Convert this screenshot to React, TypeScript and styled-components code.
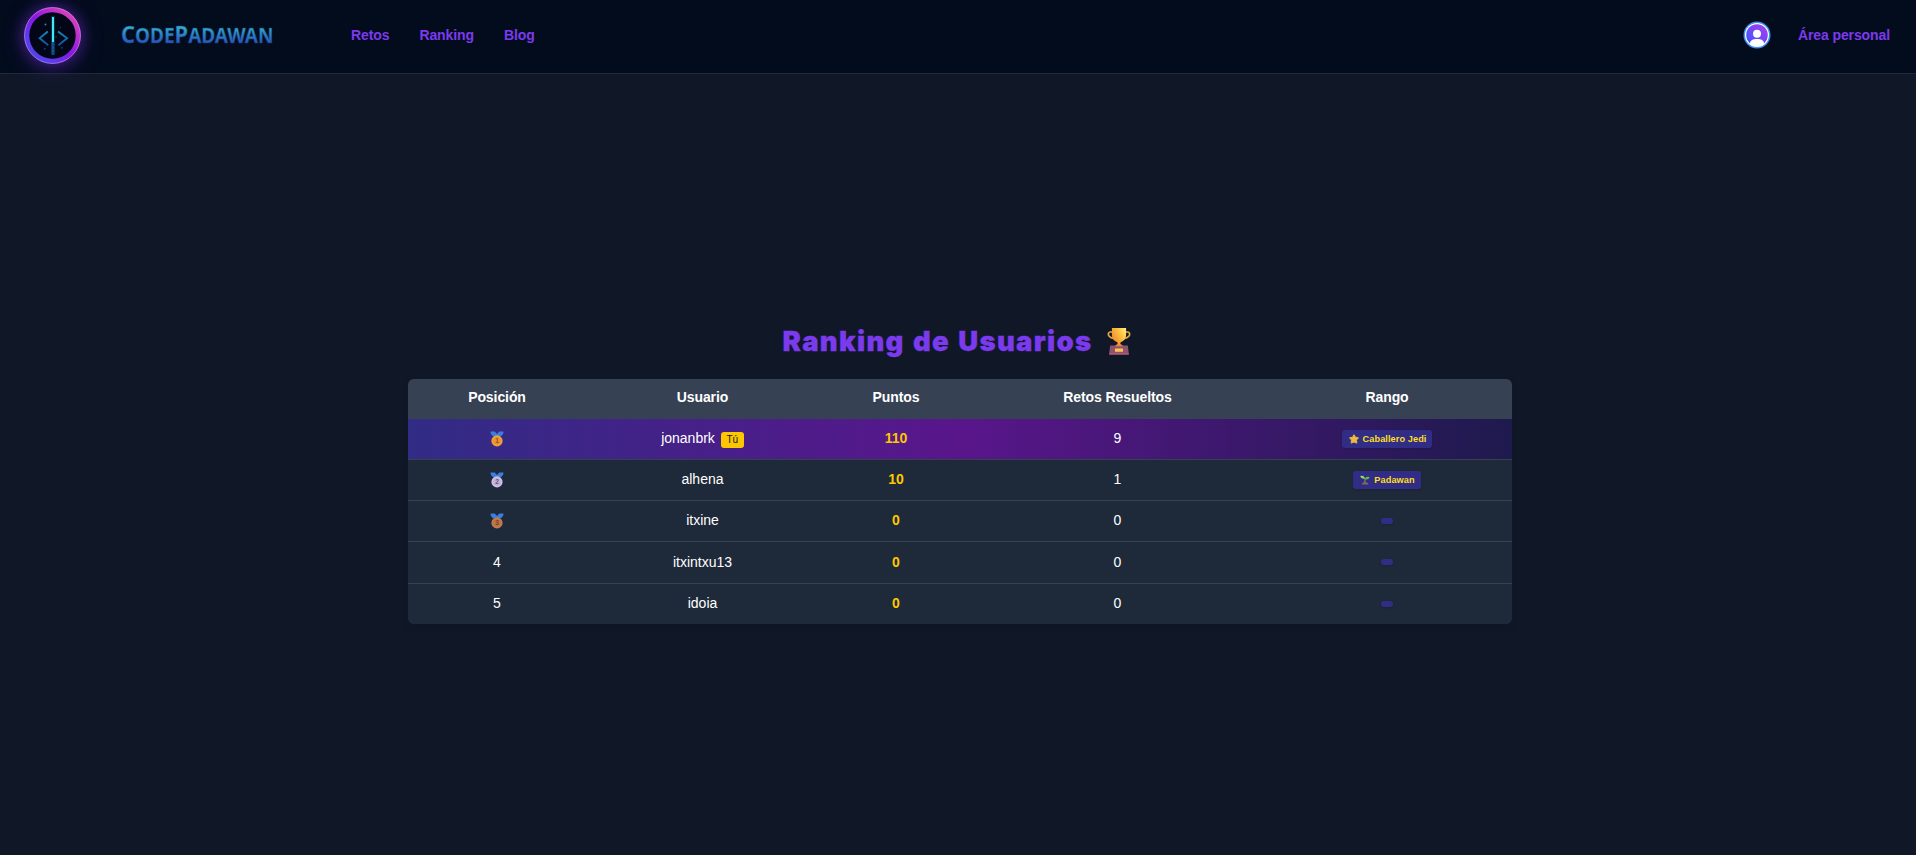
import React from "react";
import styled, { createGlobalStyle } from "styled-components";

const GlobalStyle = createGlobalStyle`
  *, *::before, *::after { box-sizing: border-box; }
  body {
    margin: 0;
    background: #101828;
    color: #fff;
    font-family: "Liberation Sans", Arial, sans-serif;
    font-size: 14px;
  }
`;

const Page = styled.div`
  display: flex;
  flex-direction: column;
  height: 855px;
  overflow: hidden;
`;

const NavBar = styled.header`
  display: flex;
  align-items: center;
  height: 74px;
  padding: 0 26px 3px 24px;
  background: #030c1d;
  border-bottom: 1px solid #1e2939;
`;

const LogoRing = styled.div`
  width: 57px;
  height: 57px;
  border-radius: 50%;
  box-shadow: 0 0 14px 1px rgba(130, 50, 235, 0.4), 0 4px 24px rgba(130, 50, 235, 0.25);
  svg { display: block; }
`;

const Brand = styled.div`
  display: flex;
  margin-left: 39px;
  svg { display: block; overflow: visible; }
`;

const Links = styled.nav`
  display: flex;
  gap: 30px;
  margin-left: 77px;
`;

const NavLink = styled.a`
  color: #7c3aed;
  font-weight: 700;
  font-size: 14px;
  line-height: 20px;
  letter-spacing: -0.1px;
  text-decoration: none;
`;

const Account = styled.div`
  display: flex;
  align-items: center;
  gap: 27px;
  margin-left: auto;
  svg { display: block; }
`;

const Main = styled.main`
  display: flex;
  flex-direction: column;
  align-items: center;
  padding: 248px 0 0 4px;
`;

const Title = styled.h1`
  display: flex;
  align-items: center;
  margin: 0 6px 18px 0;
  height: 39px;
  color: #7c3aed;
  font-family: Inter, "Liberation Sans", sans-serif;
  font-weight: 900;
  font-size: 27.5px;
  line-height: 39px;
  white-space: nowrap;
  svg { margin: 0 0 2px 15px; }
`;

const TitleText = styled.span`
  letter-spacing: 1.3px;
  word-spacing: 1.5px;
  -webkit-text-stroke: 0.3px #7c3aed;
`;

const TableFrame = styled.div`
  width: 1104px;
  height: 245px;
  border-radius: 6px;
  overflow: hidden;
  background: #1e2939;
  box-shadow: 0 3px 6px rgba(3, 7, 18, 0.12);
`;

const Table = styled.table`
  width: 100%;
  table-layout: fixed;
  border-collapse: separate;
  border-spacing: 0;
  text-align: center;
`;

const Col = styled.col<{ $width: number }>`
  width: ${(p) => p.$width}px;
`;

const HeadRow = styled.tr`
  height: 40px;
  background: #364153;
`;

const HeadCell = styled.th`
  padding: 0 0 4px;
  font-size: 14px;
  font-weight: 700;
  line-height: 20px;
  letter-spacing: -0.08px;
`;

const Row = styled.tr<{ $current?: boolean; $height: number }>`
  height: ${(p) => p.$height}px;
  background: ${(p) =>
    p.$current ? "linear-gradient(90deg, #312c85, #59168b, #1e1a4d)" : "#1e2939"};
  &:not(:last-child) td { border-bottom: 1px solid #364153; }
`;

const Cell = styled.td<{ $points?: boolean }>`
  padding: 0 0 2px;
  font-size: 14px;
  line-height: 20px;
  color: ${(p) => (p.$points ? "#fdc700" : "#fff")};
  font-weight: ${(p) => (p.$points ? 700 : 400)};
`;

const CellContent = styled.div<{ $drop?: number }>`
  display: flex;
  align-items: center;
  justify-content: center;
  padding-top: ${(p) => p.$drop ?? 0}px;
`;

const YouBadge = styled.span`
  margin: 3px 0 0 6px;
  width: 23px;
  height: 16px;
  border-radius: 3px;
  background: #fdc700;
  color: #101828;
  font-size: 10px;
  line-height: 16px;
`;

const RankBadge = styled.span<{ $empty?: boolean }>`
  display: flex;
  align-items: center;
  gap: 4px;
  height: ${(p) => (p.$empty ? 6 : 18)}px;
  width: ${(p) => (p.$empty ? "12px" : "auto")};
  padding: 0 ${(p) => (p.$empty ? 0 : 6)}px 0 ${(p) => (p.$empty ? 0 : 7)}px;
  border-radius: 3px;
  background: #312c85;
  color: #ffdf20;
  font-size: 9.2px;
  font-weight: 700;
  letter-spacing: 0.08px;
  line-height: 18px;
  white-space: nowrap;
  box-shadow: 0 1px 2px rgba(0, 0, 0, 0.12);
`;

const Logo = () => (
  <svg width="57" height="57" viewBox="0 0 57 57" fill="none">
    <defs>
      <linearGradient id="ring" x1="8" y1="50" x2="49" y2="7" gradientUnits="userSpaceOnUse">
        <stop stopColor="#4f46e5" />
        <stop offset="0.17" stopColor="#5b3df0" />
        <stop offset="0.5" stopColor="#8a17e4" />
        <stop offset="0.85" stopColor="#c535c8" />
        <stop offset="1" stopColor="#d946b5" />
      </linearGradient>
      <linearGradient id="code" x1="0" y1="24" x2="0" y2="39" gradientUnits="userSpaceOnUse">
        <stop stopColor="#128dbb" />
        <stop offset="1" stopColor="#0a4f9b" />
      </linearGradient>
    </defs>
    <circle cx="28.5" cy="28.5" r="28.3" fill="url(#ring)" />
    <circle cx="28.5" cy="28.5" r="28" stroke="#c98cf2" strokeOpacity="0.65" />
    <circle cx="28.5" cy="28.5" r="23.2" fill="#020617" />
    <path d="M23.8 24.5 15.6 31.3l8.7 7M34 24.5l9.1 6.8-8.7 7" stroke="url(#code)" strokeWidth="1.9" />
    <path d="M29 9v38" stroke="#0891b2" strokeOpacity="0.25" strokeWidth="4" />
    <path d="M29 10v25" stroke="#40e8f2" strokeWidth="2.1" />
    <path d="M29 35v13" stroke="#0a4a86" strokeWidth="2.8" />
    <path d="M28.8 36v10" stroke="#1172b4" strokeWidth="0.8" strokeDasharray="2 1.5" />
    <circle cx="21.5" cy="17.5" r="0.9" fill="#16a5ae" />
    <circle cx="36.5" cy="20.5" r="0.7" fill="#0a4562" />
    <circle cx="20.8" cy="41.8" r="0.9" fill="#0a4a80" />
    <circle cx="37.8" cy="40.8" r="0.9" fill="#0a4a80" />
    <circle cx="32" cy="30" r="0.7" fill="#0a5a80" />
  </svg>
);

const BrandName = () => (
  <svg width="154" height="24" viewBox="0 0 154 24">
    <defs>
      <linearGradient id="brand" x1="0" y1="3" x2="0" y2="20" gradientUnits="userSpaceOnUse">
        <stop stopColor="#32b3d8" />
        <stop offset="0.45" stopColor="#2987c8" />
        <stop offset="1" stopColor="#2853c2" />
      </linearGradient>
    </defs>
    <text
      x="1"
      y="19.5"
      textLength="152.5"
      lengthAdjust="spacingAndGlyphs"
      fill="url(#brand)"
      stroke="#1d3d6b"
      strokeWidth="0.4"
      fontFamily="'Noto Sans', sans-serif"
      fontWeight="700"
      fontSize="23.5"
    >
      C<tspan fontSize="20.5">ODE</tspan>P<tspan fontSize="20.5">ADAWAN</tspan>
    </text>
  </svg>
);

const Avatar = () => (
  <svg width="28" height="28" viewBox="0 0 28 28">
    <defs>
      <linearGradient id="avatar" x1="6" y1="23" x2="22" y2="5" gradientUnits="userSpaceOnUse">
        <stop stopColor="#4f46e5" />
        <stop offset="0.25" stopColor="#5454ff" />
        <stop offset="0.6" stopColor="#8044f5" />
        <stop offset="1" stopColor="#9a44f2" />
      </linearGradient>
      <clipPath id="avatarClip"><circle cx="14" cy="14" r="11.5" /></clipPath>
    </defs>
    <circle cx="14" cy="14" r="13.5" fill="#3b93ee" />
    <circle cx="14" cy="14" r="12" fill="#fff" />
    <circle cx="14" cy="14" r="10.8" fill="url(#avatar)" />
    <g clipPath="url(#avatarClip)" fill="#fff">
      <circle cx="14" cy="12.7" r="4" />
      <path d="M7 25v-2.5C7 19.3 10 18 14 18s7 1.3 7 4.5V25z" />
    </g>
  </svg>
);

const Trophy = () => (
  <svg width="24" height="28" viewBox="0 0 24 28" fill="none">
    <defs>
      <linearGradient id="cup" x1="5" y1="12" x2="20" y2="3" gradientUnits="userSpaceOnUse">
        <stop stopColor="#f18a2c" />
        <stop offset="0.5" stopColor="#f9bb3e" />
        <stop offset="1" stopColor="#fff071" />
      </linearGradient>
    </defs>
    <path d="M6.5 5H3.3C1.3 5 .8 7.3 2 9c1.5 2 3.800 2.400 5.500 2.600M17.500 5h3.200c2 0 2.500 2.300 1.300 4-1.500 2-3.800 2.400-5.500 2.600" stroke="#e9a83d" strokeWidth="1.7" />
    <path d="M4.900 1h14.200v6.500c0 4.300-2.200 6.300-5 7.500-.9.500-1 1.700-.3 2.400.5.500 1 .8 1 1.600H9.200c0-.8.5-1.100 1-1.600.7-.7.6-1.900-.3-2.400-2.800-1.200-5-3.200-5-7.500z" fill="url(#cup)" />
    <path d="M3.200 18.500h17.600l1.100 9H2.100z" fill="#90536c" />
    <path d="M9 17.800h6l1 1.500H8z" fill="#e9823a" />
    <path d="M2.200 26.300h19.600v1.300H2.200z" fill="#b35b77" />
    <rect x="8" y="21.500" width="8" height="3.200" rx="0.5" fill="#ffc25b" />
  </svg>
);

const medalColors = [
  ["#f7a036", "#8e4c2a"],
  ["#cfc0e4", "#68547e"],
  ["#c67b4b", "#75402e"],
];

const Medal = ({ place }: { place: number }) => {
  const [face, ink] = medalColors[place - 1];
  return (
    <svg width="14" height="16" viewBox="0 0 14 16">
      <path d="M.5 1.2C.5.6.9.5 1.3.5h3.500L7 3 9.200.5h3.500c.4 0 .8.100.8.700 0 1.800-1.800 3.700-4 4.500h-5C2.300 4.900.5 3 .5 1.200z" fill="#397ee0" />
      <circle cx="7" cy="9.900" r="5.600" fill={face} />
      <circle cx="7" cy="9.900" r="3.900" fill={ink} fillOpacity="0.12" />
      <text x="7" y="12.200" textAnchor="middle" fontFamily="'Liberation Sans', sans-serif" fontSize="6.5" fontWeight="700" fill={ink}>{place}</text>
    </svg>
  );
};

const Star = () => (
  <svg width="10" height="10" viewBox="0 0 10 10">
    <path d="M5 .7 6.500 3.200l3 .6-2 2.300.4 3L5 8.100 2.100 9.100l.4-3-2-2.300 3-.6z" fill="#edbb3e" stroke="#edbb3e" strokeWidth="0.9" strokeLinejoin="round" />
  </svg>
);

const Seedling = () => (
  <svg width="10" height="10" viewBox="0 0 10 10">
    <path d="M1.700 9.500C1.700 7.900 3.200 7 5 7s3.500.9 3.500 2.500z" fill="#8b6258" />
    <path d="M4.900 7.600V3.500" stroke="#4d9d5a" strokeWidth="1.2" />
    <path d="M.3 1c2.400-.7 4.300.1 4.600 2.700C2.500 4 .6 3.300.3 1z" fill="#98db55" />
    <path d="M4.900 4.200C5.100 2 7 1.300 9.600 2c-.3 2-2.200 2.900-4.700 2.200z" fill="#62b654" />
  </svg>
);

type Player = { name: string; points: number; solved: number; rank?: string; height: number };

const players: Player[] = [
  { name: "jonanbrk", points: 110, solved: 9, rank: "Caballero Jedi", height: 41 },
  { name: "alhena", points: 10, solved: 1, rank: "Padawan", height: 41 },
  { name: "itxine", points: 0, solved: 0, height: 41 },
  { name: "itxintxu13", points: 0, solved: 0, height: 42 },
  { name: "idoia", points: 0, solved: 0, height: 40 },
];

const columns = [
  { title: "Posición", width: 178 },
  { title: "Usuario", width: 233 },
  { title: "Puntos", width: 154 },
  { title: "Retos Resueltos", width: 289 },
  { title: "Rango", width: 250 },
];

export default function App() {
  return (
    <Page>
      <GlobalStyle />
      <NavBar>
        <LogoRing><Logo /></LogoRing>
        <Brand><BrandName /></Brand>
        <Links>
          <NavLink>Retos</NavLink>
          <NavLink>Ranking</NavLink>
          <NavLink>Blog</NavLink>
        </Links>
        <Account>
          <Avatar />
          <NavLink>Área personal</NavLink>
        </Account>
      </NavBar>
      <Main>
        <Title>
          <TitleText>Ranking de Usuarios</TitleText>
          <Trophy />
        </Title>
        <TableFrame>
          <Table>
            <colgroup>
              {columns.map((c) => <Col key={c.title} $width={c.width} />)}
            </colgroup>
            <thead>
              <HeadRow>
                {columns.map((c) => <HeadCell key={c.title}>{c.title}</HeadCell>)}
              </HeadRow>
            </thead>
            <tbody>
              {players.map((p, i) => (
                <Row key={p.name} $current={i === 0} $height={p.height}>
                  <Cell><CellContent $drop={i < 3 ? 1 : 0}>{i < 3 ? <Medal place={i + 1} /> : i + 1}</CellContent></Cell>
                  <Cell>
                    <CellContent>
                      {p.name}
                      {i === 0 && <YouBadge>Tú</YouBadge>}
                    </CellContent>
                  </Cell>
                  <Cell $points>{p.points}</Cell>
                  <Cell>{p.solved}</Cell>
                  <Cell>
                    <CellContent $drop={1}>
                      <RankBadge $empty={!p.rank}>
                        {p.rank && (i === 0 ? <Star /> : <Seedling />)}
                        {p.rank}
                      </RankBadge>
                    </CellContent>
                  </Cell>
                </Row>
              ))}
            </tbody>
          </Table>
        </TableFrame>
      </Main>
    </Page>
  );
}
